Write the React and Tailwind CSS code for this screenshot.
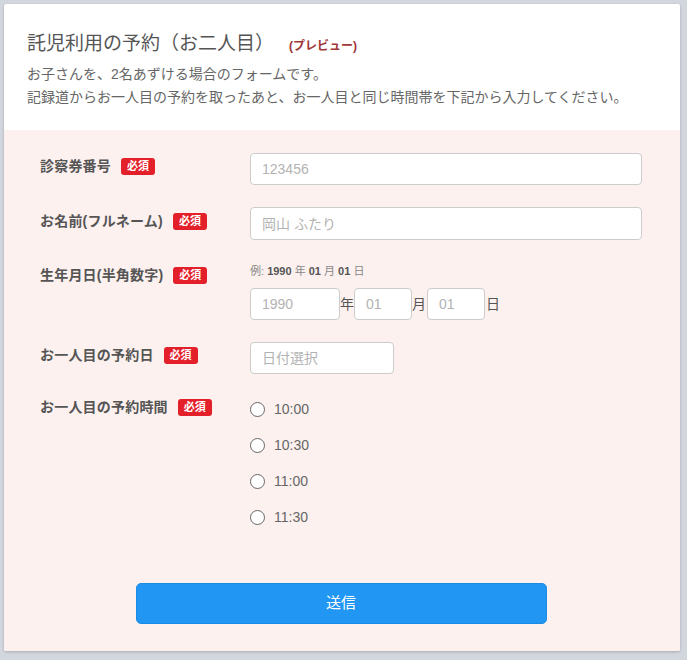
import React from "react";

const font = { fontFamily: '"Liberation Sans", "Noto Sans CJK JP", sans-serif' };

const Badge = () => (
    <span className="inline-flex items-center h-[17px] px-[6px] rounded-[3px] bg-[#e3202a] text-white text-[11px] font-bold leading-none">
        必須
    </span>
);

const Label = ({ children }) => (
    <div className="flex items-center gap-[10px] text-[14px] font-bold text-[#555] leading-[20px]">
        <span className="tracking-[0.2px]">{children}</span>
        <Badge />
    </div>
);

const inputCls =
    "h-[32px] rounded-[4px] border border-[#ccc] bg-white px-[11px] text-[14px] text-[#555] placeholder:text-[#b3b3b3] outline-none";

const times = ["10:00", "10:30", "11:00", "11:30"];

export default function App() {
    return (
        <div className="min-h-[660px] bg-[#d2d6dd] pt-[4px] pb-[8px] pl-[4px]" style={font}>
            <div className="w-[676px] bg-white shadow-[0_1px_3px_rgba(0,0,0,0.2)] rounded-[2px] overflow-hidden">
                <div className="px-[23px] pt-[26px] pb-[21px]">
                    <div className="flex items-baseline gap-[15px]">
                        <h1 className="text-[19px] text-[#555] leading-[28px]">託児利用の予約（お二人目）</h1>
                        <span className="text-[12px] font-bold text-[#a23535]">(プレビュー)</span>
                    </div>
                    <p className="mt-[5px] text-[14px] text-[#666] leading-[23px]">
                        お子さんを、2名あずける場合のフォームです。
                        <br />
                        記録道からお一人目の予約を取ったあと、お一人目と同じ時間帯を下記から入力してください。
                    </p>
                </div>

                <div className="bg-[#fcf1ef] pl-[36px] pr-[38px] pt-[23px] pb-[27px]">
                    <div className="grid grid-cols-[210px_1fr] gap-y-[22px]">
                        <div className="pt-[3px]"><Label>診察券番号</Label></div>
                        <input className={inputCls} placeholder="123456" />

                        <div className="pt-[4px]"><Label>お名前(フルネーム)</Label></div>
                        <input className={inputCls + " h-[33px]"} placeholder="岡山 ふたり" />

                        <div className="pt-[3px]"><Label>生年月日(半角数字)</Label></div>
                        <div>
                            <div className="text-[11px] text-[#888] leading-[18px]">
                                例: <b className="text-[#555]">1990</b> 年 <b className="text-[#555]">01</b> 月 <b className="text-[#555]">01</b> 日
                            </div>
                            <div className="mt-[8px] flex items-center text-[14px] text-[#555]">
                                <input className={inputCls + " w-[90px] h-[31px]"} placeholder="1990" />
                                <span className="w-[14px]">年</span>
                                <input className={inputCls + " w-[58px] h-[31px]"} placeholder="01" />
                                <span className="w-[15px]">月</span>
                                <input className={inputCls + " w-[58px] h-[31px]"} placeholder="01" />
                                <span className="ml-[1px]">日</span>
                            </div>
                        </div>

                        <div className="pt-[3px]"><Label>お一人目の予約日</Label></div>
                        <input className={inputCls + " w-[144px]"} placeholder="日付選択" />

                        <div className="pt-[1px]"><Label>お一人目の予約時間</Label></div>
                        <div className="flex flex-col gap-[16px] pt-[3px]">
                            {times.map((t) => (
                                <label key={t} className="flex items-center gap-[9px] h-[20px] text-[14px] text-[#666]">
                                    <span className="w-[15px] h-[15px] rounded-full border border-[#666] bg-white" />
                                    <span>{t}</span>
                                </label>
                            ))}
                        </div>
                    </div>

                    <div className="mt-[56px] flex justify-center">
                        <button className="w-[411px] h-[41px] rounded-[5px] bg-[#2196f3] border border-[#1b8be6] text-white text-[15px]">
                            送信
                        </button>
                    </div>
                </div>
            </div>
        </div>
    );
}
